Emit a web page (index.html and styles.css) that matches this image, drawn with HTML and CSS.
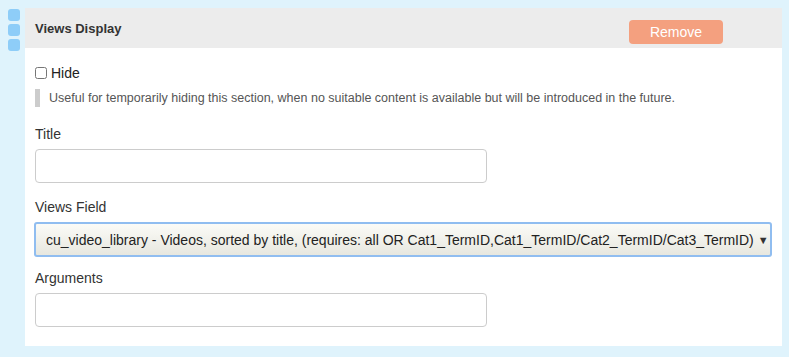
FILE: index.html
```html
<!DOCTYPE html>
<html lang="en">
<head>
  <meta charset="UTF-8">
  <title>Views Display</title>
  <link rel="stylesheet" href="styles.css">
</head>
<body>

<div class="section-row">
  <div class="drag-handle">
    <span></span><span></span><span></span>
  </div>

  <div class="panel">
    <div class="panel-header">
      <div class="panel-title">Views Display</div>
      <button class="remove-button">Remove</button>
    </div>

    <div class="panel-body">
      <label class="check-row"><input type="checkbox"> Hide</label>
      <div class="description">Useful for temporarily hiding this section, when no suitable content is available but will be introduced in the future.</div>

      <label class="field-label">Title</label>
      <input class="text-input" type="text">

      <label class="field-label">Views Field</label>
      <div class="select-box">
        <span>cu_video_library - Videos, sorted by title, (requires: all OR Cat1_TermID,Cat1_TermID/Cat2_TermID/Cat3_TermID)</span>
        <span class="arrow">&#9660;</span>
      </div>

      <label class="field-label">Arguments</label>
      <input class="text-input" type="text">
    </div>
  </div>
</div>

</body>
</html>
```

FILE: styles.css
```css
html, body { margin: 0; background-color: #dff3fc; }
body { padding: 8px 7px 10px 8px; font-family: "Liberation Sans", Arial, sans-serif; color: #333; }

.section-row { display: flex; }
.drag-handle { width: 17px; display: flex; flex-direction: column; gap: 3px; padding-top: 1px; }
.drag-handle span { display: block; width: 12px; height: 12px; border-radius: 3px; background-color: #8ecdf8; }

.panel { flex: 1; background-color: white; }
.panel-header {
  height: 40px; background-color: #ececec; padding: 0 59px 0 10px;
  display: flex; align-items: center; justify-content: space-between;
}
.panel-title { font-size: 13px; font-weight: bold; color: #333; }
.remove-button {
  margin-top: 8px; width: 94px; height: 24px; border: none; border-radius: 4px;
  background-color: #f4a07f; color: white; font-family: inherit; font-size: 14px; cursor: pointer;
}

.panel-body { padding: 15px 10px 19px 10px; }
.check-row { display: flex; align-items: center; height: 20px; font-size: 14px; color: #222; }
.check-row input { margin: 0 4px 0 0; width: 12px; height: 12px; }
.description {
  margin-top: 6px; border-left: 5px solid #cccccc; padding-left: 9px;
  font-size: 12.5px; line-height: 18px; color: #555;
}

.field-label { display: block; font-size: 14px; line-height: 20px; color: #333; margin-top: 14px; margin-bottom: 5px; }
.description + .field-label { margin-top: 17px; }
.text-input {
  display: block; box-sizing: border-box; width: 452px; height: 34px;
  border: 1px solid #cccccc; border-radius: 4px; padding: 6px 10px; font-size: 14px;
}
.select-box {
  box-sizing: border-box; width: 738px; height: 35px; margin-left: -1px; margin-bottom: 11px;
  border: 2px solid #90bdf0; border-radius: 3px; padding: 0 10px 0 10px;
  background: linear-gradient(#fbfbf7, #e7e7df);
  display: flex; align-items: center; justify-content: space-between;
  font-size: 14px; color: #222; white-space: nowrap;
}
.select-box .arrow { font-size: 11px; color: #333; margin-left: 4px; }
.select-box + .field-label { margin-top: 0; }
```
